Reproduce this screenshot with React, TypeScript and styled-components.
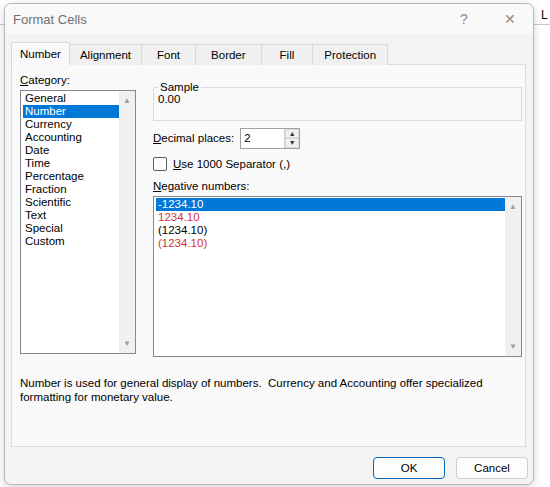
import React from 'react';
import styled, { createGlobalStyle } from 'styled-components';

const Global = createGlobalStyle`
  body { margin: 0; background: #fff; font-family: "Liberation Sans", Arial, sans-serif; font-size: 11.5px; color: #000; }
`;

const Desk = styled.div`
  position: relative;
  width: 550px;
  height: 487px;
  overflow: hidden;
  &::before {
    content: '';
    position: absolute;
    left: 0; right: 0; top: 24px;
    border-top: 1px solid #c8c8c8;
  }
`;

const BackText = styled.span`
  position: absolute;
  left: 541px;
  top: 8px;
  font-size: 12px;
`;

const Window = styled.div`
  position: relative;
  margin: 3px 0 0 4px;
  width: 528px;
  height: 480px;
  background: #f3f3f3;
  border: 1px solid #b9b9b9;
  border-radius: 7px;
  box-shadow: 0 2px 8px rgba(0, 0, 0, 0.18);
  display: flex;
  flex-direction: column;
  overflow: hidden;
`;

const TitleBar = styled.div`
  height: 30px;
  display: flex;
  align-items: center;
  padding-left: 8px;
  background: #f9f9f9;
  font-size: 13px;
  color: #6f6f6f;
`;

const Title = styled.span`
  flex: 1;
`;

const TitleButton = styled.span`
  width: 46px;
  text-align: center;
  color: #8a8a8a;
  font-size: 14px;
`;

const Tabs = styled.div`
  display: flex;
  margin: 9px 0 0 7px;
  height: 22px;
  align-items: flex-end;
`;

const Tab = styled.div<{ active?: boolean; w: number }>`
  height: ${(p) => (p.active ? 22 : 20)}px;
  padding: 0 ${(p) => p.w}px;
  display: flex;
  align-items: center;
  border: 1px solid #d9d9d9;
  border-bottom: none;
  margin-left: -1px;
  background: ${(p) => (p.active ? '#f9f9f9' : '#f0f0f0')};
  position: relative;
  z-index: ${(p) => (p.active ? 2 : 1)};
`;

const Page = styled.div`
  margin: -1px 0 0 6px;
  width: 515px;
  height: 383px;
  border: 1px solid #dcdcdc;
  background: #f9f9f9;
  padding: 8px 0 0 8px;
  box-sizing: border-box;
  display: flex;
  flex-direction: column;
`;

const Columns = styled.div`
  display: flex;
  gap: 17px;
`;

const LeftCol = styled.div`
  display: flex;
  flex-direction: column;
  width: 116px;
`;

const RightCol = styled.div`
  display: flex;
  flex-direction: column;
  width: 369px;
  padding-top: 8px;
`;

const Label = styled.div`
  height: 15px;
  line-height: 15px;
  margin-bottom: 2px;
`;

const U = styled.span`
  text-decoration: underline;
`;

const List = styled.div<{ h: number }>`
  height: ${(p) => p.h}px;
  border: 1px solid #828790;
  background: #fff;
  display: flex;
  box-sizing: border-box;
`;

const Items = styled.div`
  flex: 1;
  padding: 1px 0 0 2px;
`;

const Item = styled.div<{ selected?: boolean; red?: boolean }>`
  height: 13px;
  line-height: 13px;
  padding-left: 2px;
  overflow: hidden;
  background: ${(p) => (p.selected ? '#0078d7' : 'transparent')};
  color: ${(p) => (p.selected ? '#fff' : p.red ? '#d13438' : '#000')};
`;

const Scroll = styled.div`
  width: 16px;
  background: #f0f0f0;
  display: flex;
  flex-direction: column;
  justify-content: space-between;
  align-items: center;
  padding: 5px 0;
  color: #a0a0a0;
  font-size: 8px;
`;

const Group = styled.fieldset`
  margin: 0 0 6px;
  border: 1px solid #dcdcdc;
  padding: 0 0 6px 4px;
  height: 40px;
  box-sizing: border-box;
  legend {
    padding: 0 2px;
  }
`;

const Row = styled.div<{ tight?: boolean }>`
  display: flex;
  align-items: center;
  gap: 6px;
  height: 22px;
  margin: ${(p) => (p.tight ? '-4px 0 4px' : '0 0 8px')};
`;

const Spin = styled.div`
  display: flex;
  width: 58px;
  height: 19px;
  border: 1px solid #a0a0a0;
  background: #fff;
`;

const SpinValue = styled.div`
  flex: 1;
  padding-left: 3px;
  line-height: 18px;
`;

const SpinButtons = styled.div`
  width: 14px;
  display: flex;
  flex-direction: column;
  border-left: 1px solid #cfcfcf;
  font-size: 7px;
  color: #333;
  div {
    flex: 1;
    display: flex;
    align-items: center;
    justify-content: center;
    background: #f0f0f0;
    border: 1px solid #dadada;
  }
`;

const Check = styled.div`
  width: 12px;
  height: 12px;
  border: 1px solid #5e5e5e;
  border-radius: 2px;
  background: #fff;
`;

const Description = styled.div`
  margin-top: 19px;
  line-height: 14px;
  width: 470px;
`;

const Footer = styled.div`
  display: flex;
  justify-content: flex-end;
  gap: 11px;
  padding: 10px 5px 0 0;
`;

const Button = styled.div<{ primary?: boolean }>`
  width: 70px;
  height: 20px;
  border: 1px solid ${(p) => (p.primary ? '#0067c0' : '#d0d0d0')};
  border-radius: 4px;
  background: #fdfdfd;
  display: flex;
  align-items: center;
  justify-content: center;
`;

const categories = ['General', 'Number', 'Currency', 'Accounting', 'Date', 'Time', 'Percentage', 'Fraction', 'Scientific', 'Text', 'Special', 'Custom'];

const tabs: [string, number][] = [
  ['Number', 8],
  ['Alignment', 10],
  ['Font', 15],
  ['Border', 15],
  ['Fill', 18],
  ['Protection', 11],
];

export default function App() {
  return (
    <Desk>
      <Global />
      <BackText>L</BackText>
      <Window>
        <TitleBar>
          <Title>Format Cells</Title>
          <TitleButton>?</TitleButton>
          <TitleButton>✕</TitleButton>
        </TitleBar>
        <Tabs>
          {tabs.map(([t, w], i) => (
            <Tab key={t} active={i === 0} w={w}>
              {t}
            </Tab>
          ))}
        </Tabs>
        <Page>
          <Columns>
            <LeftCol>
              <Label>
                <U>C</U>ategory:
              </Label>
              <List h={264}>
                <Items>
                  {categories.map((c) => (
                    <Item key={c} selected={c === 'Number'}>
                      {c}
                    </Item>
                  ))}
                </Items>
                <Scroll>
                  <span>▲</span>
                  <span>▼</span>
                </Scroll>
              </List>
            </LeftCol>
            <RightCol>
              <Group>
                <legend>Sample</legend>
                0.00
              </Group>
              <Row>
                <span>
                  <U>D</U>ecimal places:
                </span>
                <Spin>
                  <SpinValue>2</SpinValue>
                  <SpinButtons>
                    <div>▲</div>
                    <div>▼</div>
                  </SpinButtons>
                </Spin>
              </Row>
              <Row tight>
                <Check />
                <span>
                  <U>U</U>se 1000 Separator (,)
                </span>
              </Row>
              <Label>
                <U>N</U>egative numbers:
              </Label>
              <List h={161}>
                <Items>
                  <Item selected>-1234.10</Item>
                  <Item red>1234.10</Item>
                  <Item>(1234.10)</Item>
                  <Item red>(1234.10)</Item>
                </Items>
                <Scroll>
                  <span>▲</span>
                  <span>▼</span>
                </Scroll>
              </List>
            </RightCol>
          </Columns>
          <Description>
            Number is used for general display of numbers.&nbsp; Currency and Accounting offer specialized formatting for monetary value.
          </Description>
        </Page>
        <Footer>
          <Button primary>OK</Button>
          <Button>Cancel</Button>
        </Footer>
      </Window>
    </Desk>
  );
}
